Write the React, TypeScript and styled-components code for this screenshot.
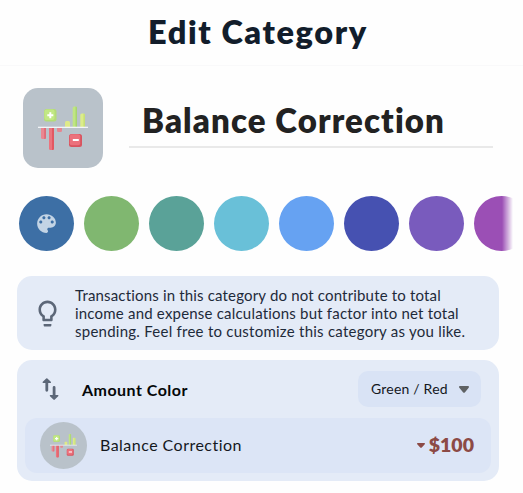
import React from "react";
import styled, { createGlobalStyle } from "styled-components";

const Global = createGlobalStyle`
  * { box-sizing: border-box; }
  html, body { margin: 0; background: #fefefe; }
  body { font-family: Lato, "Liberation Sans", sans-serif; overflow: hidden; }
  h1, p { margin: 0; }
  svg { display: block; flex: none; }
`;

const Page = styled.main`
  width: 523px;
  height: 493px;
  overflow: hidden;
  background: #fefefe;
`;

const Header = styled.header`
  height: 66px;
  padding: 12px 0 0 148px;
  border-bottom: 1px solid #f9f9fa;
`;

const Title = styled.h1`
  font-size: 32.5px;
  line-height: 40px;
  font-weight: 800;
  letter-spacing: 1.6px;
  color: #121d2b;
  white-space: nowrap;
`;

const NameRow = styled.section`
  display: flex;
  gap: 26px;
  padding: 22px 30px 0 23px;
`;

const Tile = styled.div<{ $size: number; $radius: string }>`
  display: grid;
  place-items: center;
  flex: none;
  width: ${(p) => p.$size}px;
  height: ${(p) => p.$size}px;
  border-radius: ${(p) => p.$radius};
  background: #b9c2ca;
`;

const NameField = styled.div`
  flex: 1;
  height: 60px;
  padding: 12px 0 0 13px;
  border-bottom: 2px solid #e9e9e9;
  font-size: 33px;
  line-height: 40px;
  font-weight: 800;
  letter-spacing: 1.1px;
  color: #222;
  white-space: nowrap;
`;

const Swatches = styled.section`
  display: flex;
  gap: 10px;
  width: 513px;
  margin-top: 28px;
  padding-left: 19px;
  overflow: hidden;
  mask-image: linear-gradient(to right, #000 502px, transparent 513px);
`;

const Swatch = styled.div<{ $color: string }>`
  display: grid;
  place-items: center;
  flex: none;
  width: 55px;
  height: 55px;
  border-radius: 50%;
  background: ${(p) => p.$color};
`;

const InfoCard = styled.section`
  display: flex;
  align-items: center;
  height: 74px;
  margin: 25px 24px 0 17px;
  padding: 0 0 0 15px;
  border-radius: 15px;
  background: #e4ebf7;
`;

const InfoText = styled.p`
  margin-left: 12px;
  font-size: 15px;
  line-height: 18px;
  color: #1e2a3a;
  white-space: nowrap;
`;

const Line = styled.span<{ $spacing: number }>`
  display: block;
  letter-spacing: ${(p) => p.$spacing}px;
`;

const AmountCard = styled.section`
  height: 121px;
  margin: 10px 24px 0 17px;
  padding: 11px 8px 8px;
  border-radius: 15px;
  background: #e4ebf7;
`;

const AmountHead = styled.div`
  display: flex;
  align-items: center;
  height: 36px;
  padding: 0 10px 0 17px;
`;

const AmountLabel = styled.div`
  flex: 1;
  margin: 2px 0 0 22px;
  font-size: 16px;
  line-height: 20px;
  font-weight: 700;
  letter-spacing: 0.47px;
  color: #050708;
`;

const Select = styled.div`
  display: flex;
  align-items: center;
  justify-content: space-between;
  width: 123px;
  height: 36px;
  padding: 0 12px 0 13px;
  border-radius: 10px;
  background: #d9e3f5;
  font-size: 14px;
  letter-spacing: 0.2px;
  color: #14181d;
  white-space: nowrap;
`;

const SelectValue = styled.span`
  margin-bottom: 2px;
`;

const Preview = styled.div`
  display: flex;
  align-items: center;
  height: 55px;
  margin-top: 11px;
  padding: 0 17px 0 15px;
  border-radius: 12px;
  background: #dce5f6;
`;

const PreviewName = styled.div`
  flex: 1;
  margin: 0 0 2px 13px;
  font-size: 16px;
  letter-spacing: 0.47px;
  color: #14181d;
`;

const Amount = styled.div`
  display: flex;
  align-items: center;
  gap: 4px;
  font-size: 19.5px;
  font-weight: 800;
  color: #8c4a45;
`;

const AmountValue = styled.span`
  margin-bottom: 2px;
`;

const BalanceIcon = ({ size }: { size: number }) => (
  <svg width={size} height={size} viewBox="0 0 50 50">
    <rect x="6" y="6" width="12.5" height="12.5" rx="2.5" fill="#b4dc78" />
    <rect x="6.5" y="6.5" width="10" height="10.5" rx="2" fill="#c2e885" />
    <path d="M12.3 9.3v6M9.3 12.3h6" stroke="#fff" strokeWidth="2" />
    <path d="M27 24v-4.5a1.5 1.5 0 0 1 1.5-1.5h2a1.5 1.5 0 0 1 1.5 1.5V24z" fill="#dfea88" />
    <path d="M34.7 24V5a1.5 1.5 0 0 1 1.5-1.5h1.3A1.5 1.5 0 0 1 39 5v19z" fill="#c0e682" />
    <path d="M37.5 3.6A1.5 1.5 0 0 1 39 5v19h-1.5z" fill="#a8d570" />
    <path d="M42.3 24V12a1.5 1.5 0 0 1 1.5-1.5h1.7A1.5 1.5 0 0 1 47 12v12z" fill="#dced89" />
    <path d="M45.4 10.5A1.5 1.5 0 0 1 47 12v12h-1.6z" fill="#c8df78" />
    <path d="M3 25h5v9.5A1.5 1.5 0 0 1 6.5 36h-2A1.5 1.5 0 0 1 3 34.5z" fill="#ea8791" />
    <path d="M6.2 25H8v9.5a1.5 1.5 0 0 1-1.8 1.5z" fill="#df6b78" />
    <path d="M11 25h5v20.5a1.5 1.5 0 0 1-1.5 1.5h-2a1.5 1.5 0 0 1-1.5-1.5z" fill="#ec747e" />
    <path d="M14 25h2v20.5a1.5 1.5 0 0 1-2 1.5z" fill="#e25862" />
    <path d="M19 25h5v2.7a1.3 1.3 0 0 1-1.3 1.3h-2.4a1.3 1.3 0 0 1-1.3-1.3z" fill="#e58791" />
    <rect y="23.7" width="50" height="1.3" fill="#f2f4f7" />
    <rect x="31" y="31" width="13" height="13" rx="2.5" fill="#d8545f" />
    <rect x="31.7" y="31.3" width="10.5" height="11" rx="2" fill="#ec717c" />
    <path d="M34.8 37h6" stroke="#fff" strokeWidth="2" />
  </svg>
);

const Palette = () => (
  <svg width="25" height="25" viewBox="0 0 24 24" fill="#c3d4e5">
    <path d="M12 3c-4.97 0-9 4.03-9 9s4.03 9 9 9c.83 0 1.5-.67 1.5-1.5 0-.39-.15-.74-.39-1.01-.23-.26-.38-.61-.38-.99 0-.83.67-1.5 1.5-1.5H16c2.76 0 5-2.24 5-5 0-4.42-4.03-8-9-8zm-5.5 9c-.83 0-1.5-.67-1.5-1.5S5.67 9 6.5 9 8 9.67 8 10.5 7.33 12 6.5 12zm3-4C8.67 8 8 7.33 8 6.5S8.67 5 9.5 5s1.5.67 1.5 1.5S10.33 8 9.5 8zm5 0c-.83 0-1.5-.67-1.5-1.5S13.67 5 14.5 5s1.5.67 1.5 1.5S15.33 8 14.5 8zm3 4c-.83 0-1.5-.67-1.5-1.5S16.67 9 17.5 9s1.5.67 1.5 1.5-.67 1.5-1.5 1.5z" />
  </svg>
);

const Bulb = () => (
  <svg width="31" height="31" viewBox="0 0 24 24" fill="#5c6778">
    <path d="M9 21c0 .55.45 1 1 1h4c.55 0 1-.45 1-1v-.8H9zM12 2C8.14 2 5 5.14 5 9c0 2.38 1.19 4.47 3 5.74V17c0 .55.45 1 1 1h6c.55 0 1-.45 1-1v-2.26c1.81-1.27 3-3.36 3-5.74 0-3.86-3.14-7-7-7zm2.85 11.1l-.85.6V16h-4v-2.3l-.85-.6C7.8 12.16 7 10.63 7 9c0-2.76 2.24-5 5-5s5 2.24 5 5c0 1.63-.8 3.16-2.15 4.1z" />
  </svg>
);

const SwapVertical = () => (
  <svg width="18" height="24" viewBox="0 0 18 24" fill="#5c6778">
    <path d="M4.2 1.4a1 1 0 0 1 1.2 0l3.4 3.3c.5.6.2 1.3-.5 1.3H6.2v7.3a1.4 1.4 0 0 1-2.8 0V6H1.3C.6 6 .3 5.3.8 4.7z" />
    <path d="M12.8 22.6a1 1 0 0 1-1.4 0L8 19.3C7.500 18.700 7.800 18 8.500 18h2.200v-7.500a1.400 1.400 0 0 1 2.800 0V18h2.200c.7 0 1 .7.5 1.300z" />
  </svg>
);

const Caret = ({ width, height, color }: { width: number; height: number; color: string }) => (
  <svg width={width} height={height} viewBox="0 0 10 7" preserveAspectRatio="none">
    <path d="M1 0h8c1 0 1.300 1 .7 1.800L6 6.200c-.6.8-1.400.8-2 0L.3 1.800C-.3 1 0 0 1 0z" fill={color} />
  </svg>
);

const colors = ["#80b770", "#5aa298", "#69c0d8", "#66a2f2", "#4651b1", "#795bbd", "#9b4fb5"];

export default function App() {
  return (
    <Page>
      <Global />
      <Header>
        <Title>Edit Category</Title>
      </Header>
      <NameRow>
        <Tile $size={80} $radius="15px">
          <BalanceIcon size={50} />
        </Tile>
        <NameField>Balance Correction</NameField>
      </NameRow>
      <Swatches>
        <Swatch $color="#3d6fa5">
          <Palette />
        </Swatch>
        {colors.map((color) => (
          <Swatch key={color} $color={color} />
        ))}
      </Swatches>
      <InfoCard>
        <Bulb />
        <InfoText>
          <Line $spacing={0.17}>Transactions in this category do not contribute to total</Line>
          <Line $spacing={0.2}>income and expense calculations but factor into net total</Line>
          <Line $spacing={0.25}>spending. Feel free to customize this category as you like.</Line>
        </InfoText>
      </InfoCard>
      <AmountCard>
        <AmountHead>
          <SwapVertical />
          <AmountLabel>Amount Color</AmountLabel>
          <Select>
            <SelectValue>Green / Red</SelectValue>
            <Caret width={10} height={7} color="#5f6264" />
          </Select>
        </AmountHead>
        <Preview>
          <Tile $size={47} $radius="50%">
            <BalanceIcon size={27} />
          </Tile>
          <PreviewName>Balance Correction</PreviewName>
          <Amount>
            <Caret width={8} height={5} color="#8c4a45" />
            <AmountValue>$100</AmountValue>
          </Amount>
        </Preview>
      </AmountCard>
    </Page>
  );
}
